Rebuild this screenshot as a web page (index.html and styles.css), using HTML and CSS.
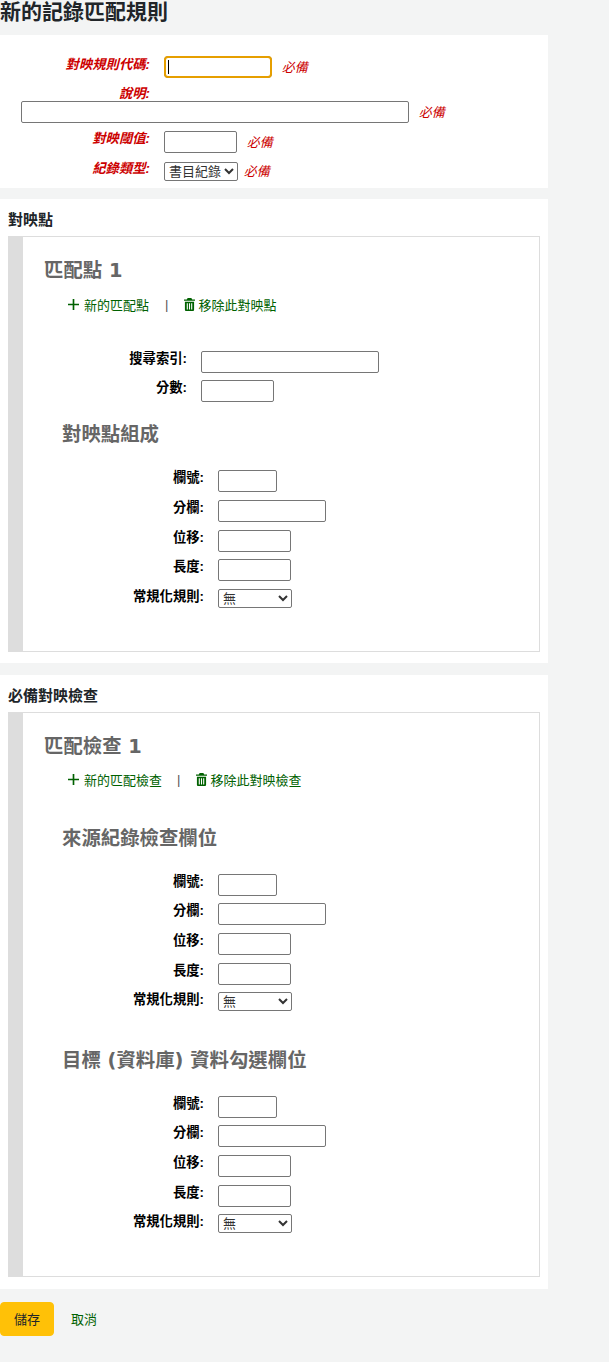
FILE: index.html
```html
<!DOCTYPE html>
<html lang="zh-Hant">
<head>
    <meta charset="UTF-8">
    <title>新的記錄匹配規則</title>
    <link rel="stylesheet" href="styles.css">
</head>
<body>
    <main class="page">
        <h1>新的記錄匹配規則</h1>

        <form>
            <div class="panel panel-main">
                <ol class="rows rows-main">
                    <li>
                        <label class="required" for="code">對映規則代碼:</label>
                        <span class="caret-wrap"><input type="text" id="code" class="w-108 is-focused"><span class="caret"></span></span>
                        <span class="required-note gap-10">必備</span>
                    </li>
                    <li>
                        <label class="required" for="desc">說明:</label>
                        <input type="text" id="desc" class="w-388">
                        <span class="required-note gap-10">必備</span>
                    </li>
                    <li>
                        <label class="required" for="threshold">對映閾值:</label>
                        <input type="text" id="threshold" class="w-73">
                        <span class="required-note gap-10">必備</span>
                    </li>
                    <li>
                        <label class="required" for="type">紀錄類型:</label>
                        <select id="type" class="select-type"><option>書目紀錄</option></select>
                        <span class="required-note gap-7">必備</span>
                    </li>
                </ol>
            </div>

            <div class="panel panel-points">
                <h2 class="legend">對映點</h2>
                <div class="inner inner-points">
                    <h3 class="block-title">匹配點 1</h3>
                    <p class="actions">
                        <a href="#" class="action">
                            <svg class="icon" viewBox="0 0 12 12"><path d="M5.100 0h1.800v5.100H12v1.800H6.900V12H5.100V6.900H0V5.100h5.100z"/></svg>新的匹配點</a>
                        <span class="sep sep-points">|</span>
                        <a href="#" class="action">
                            <svg class="icon icon-trash" viewBox="0 0 12 14"><path fill-rule="evenodd" d="M4 0h4l1 1.500h3V3H0V1.500h3zM1 4h10v8.600c0 .8-.6 1.400-1.400 1.400H2.400C1.600 14 1 13.400 1 12.600zm2 1.600v6.800h1.200V5.600zm2.400 0v6.800h1.200V5.600zm2.400 0v6.800H9V5.600z"/></svg>移除此對映點</a>
                    </p>
                    <ol class="rows rows-index">
                        <li>
                            <label>搜尋索引:</label>
                            <input type="text" class="w-178">
                        </li>
                        <li>
                            <label>分數:</label>
                            <input type="text" class="w-73">
                        </li>
                    </ol>
                    <h3 class="sub-title sub-first">對映點組成</h3>
                    <ol class="rows rows-field">
                        <li><label>欄號:</label><input type="text" class="w-59"></li>
                        <li><label>分欄:</label><input type="text" class="w-108"></li>
                        <li><label>位移:</label><input type="text" class="w-73"></li>
                        <li><label>長度:</label><input type="text" class="w-73"></li>
                        <li><label>常規化規則:</label><select class="select-norm"><option>無</option></select></li>
                    </ol>
                </div>
            </div>

            <div class="panel panel-checks">
                <h2 class="legend">必備對映檢查</h2>
                <div class="inner inner-checks">
                    <h3 class="block-title">匹配檢查 1</h3>
                    <p class="actions actions-checks">
                        <a href="#" class="action">
                            <svg class="icon" viewBox="0 0 12 12"><path d="M5.100 0h1.800v5.100H12v1.800H6.900V12H5.100V6.900H0V5.100h5.100z"/></svg>新的匹配檢查</a>
                        <span class="sep sep-checks">|</span>
                        <a href="#" class="action">
                            <svg class="icon icon-trash" viewBox="0 0 12 14"><path fill-rule="evenodd" d="M4 0h4l1 1.500h3V3H0V1.500h3zM1 4h10v8.600c0 .8-.6 1.400-1.400 1.400H2.400C1.600 14 1 13.400 1 12.600zm2 1.600v6.800h1.200V5.600zm2.400 0v6.800h1.200V5.600zm2.400 0v6.800H9V5.600z"/></svg>移除此對映檢查</a>
                    </p>
                    <h3 class="sub-title sub-source">來源紀錄檢查欄位</h3>
                    <ol class="rows rows-field">
                        <li><label>欄號:</label><input type="text" class="w-59"></li>
                        <li><label>分欄:</label><input type="text" class="w-108"></li>
                        <li><label>位移:</label><input type="text" class="w-73"></li>
                        <li><label>長度:</label><input type="text" class="w-73"></li>
                        <li><label>常規化規則:</label><select class="select-norm"><option>無</option></select></li>
                    </ol>
                    <h3 class="sub-title sub-target">目標 (資料庫) 資料勾選欄位</h3>
                    <ol class="rows rows-field">
                        <li><label>欄號:</label><input type="text" class="w-59"></li>
                        <li><label>分欄:</label><input type="text" class="w-108"></li>
                        <li><label>位移:</label><input type="text" class="w-73"></li>
                        <li><label>長度:</label><input type="text" class="w-73"></li>
                        <li><label>常規化規則:</label><select class="select-norm"><option>無</option></select></li>
                    </ol>
                </div>
            </div>

            <div class="form-actions">
                <button type="submit" class="btn-save">儲存</button>
                <a href="#" class="cancel">取消</a>
            </div>
        </form>
    </main>
</body>
</html>
```

FILE: styles.css
```css
* {
    margin: 0;
    padding: 0;
    box-sizing: border-box;
}

body {
    background-color: #f3f4f4;
    color: #212529;
    font-family: "Liberation Sans", "Noto Sans CJK TC", sans-serif;
    font-size: 13px;
}

.page {
    width: 548px;
    height: 1362px;
}

h1 {
    font-size: 21px;
    font-weight: bold;
    line-height: 24px;
    margin-bottom: 11px;
}

.panel {
    background-color: #fff;
    margin-bottom: 11px;
}

.panel-main {
    height: 153px;
    padding-top: 21px;
}

.panel-points {
    height: 464px;
    padding: 12px 8px 0;
    margin-bottom: 12px;
}

.panel-checks {
    height: 614px;
    padding: 12px 8px 0;
    margin-bottom: 13px;
}

.legend {
    font-size: 15px;
    line-height: 18px;
    margin-bottom: 7px;
}

.inner {
    border: 1px solid #ddd;
    border-left: 15px solid #ddd;
    padding-left: 21px;
}

.inner-points {
    height: 416px;
}

.inner-checks {
    height: 565px;
}

.block-title,
.sub-title {
    color: #666;
    font-family: "DejaVu Sans", "Noto Sans CJK TC", sans-serif;
    font-size: 19.4px;
    font-weight: bold;
    line-height: 24px;
}

.block-title {
    padding-top: 22px;
}

.sub-title {
    margin-left: 18px;
}

.sub-first {
    margin-top: 14.2px;
    margin-bottom: 23px;
}

.sub-source {
    margin-top: 39px;
    margin-bottom: 22.7px;
}

.sub-target {
    margin-top: 30px;
    margin-bottom: 22.6px;
}

.actions {
    display: flex;
    align-items: center;
    height: 18px;
    margin: 12px 0 0 24px;
}

.actions-checks {
    margin-top: 11px;
}

.action {
    display: flex;
    align-items: center;
    color: #006100;
    text-decoration: none;
}

.icon {
    width: 11px;
    height: 11px;
    margin-right: 5px;
    fill: #006100;
}

.icon-trash {
    height: 13px;
    margin-right: 3px;
}

.sep {
    color: #555;
}

.sep-points {
    margin: 0 16px;
}

.sep-checks {
    margin: 0 16px 0 15px;
}

.rows {
    list-style: none;
    padding-left: 21px;
}

.rows li {
    padding-bottom: 7.67px;
}

.rows-main li {
    padding-bottom: 8px;
}

.rows-index li {
    padding-bottom: 7px;
}

.rows li::after {
    content: "";
    display: block;
    clear: both;
}

.rows label {
    float: left;
    width: 129px;
    margin-right: 14px;
    font-size: 13.33px;
    font-weight: bold;
    line-height: 15px;
    text-align: right;
    color: #000;
}

.rows label.required {
    color: #c00;
    font-style: italic;
}

.rows-main li:first-child label {
    margin-top: 1px;
}

.rows-index {
    margin-top: 38px;
    padding-left: 14px;
}

.rows-field {
    padding-left: 31px;
}

.caret-wrap {
    display: inline-block;
    position: relative;
}

.caret {
    position: absolute;
    top: 4px;
    left: 4px;
    width: 1px;
    height: 14px;
    background-color: #000;
}

input[type="text"] {
    height: 22px;
    border: 1px solid #767676;
    border-radius: 2px;
    background: #fff;
    padding: 1px 2px;
    font-size: 13.33px;
}

input.is-focused {
    outline: 2px solid #e69f00;
    outline-offset: -2px;
    border-radius: 4px;
}

select {
    height: 19px;
    border: 1px solid #767676;
    border-radius: 2px;
    background: #fff;
    color: #333;
    font-family: "Liberation Sans", "Noto Sans CJK TC", sans-serif;
    font-size: 13px;
}

.select-type {
    width: 74px;
}

.select-norm {
    width: 74px;
}

.w-59 { width: 59px; }
.w-73 { width: 73px; }
.w-108 { width: 108px; }
.w-178 { width: 178px; }
.w-388 { width: 388px; }

.required-note {
    color: #c00;
    font-style: italic;
}

.gap-10 {
    margin-left: 6px;
}

.gap-7 {
    margin-left: 2px;
}

.form-actions {
    display: flex;
    align-items: center;
}

.btn-save {
    width: 54px;
    height: 34px;
    padding-bottom: 2px;
    border: 1px solid #ffc107;
    border-radius: 4px;
    background-color: #ffc107;
    color: #212529;
    font-family: inherit;
    font-size: 13px;
}

.cancel {
    margin: 0 0 2px 17px;
    color: #006100;
    text-decoration: none;
}
```
